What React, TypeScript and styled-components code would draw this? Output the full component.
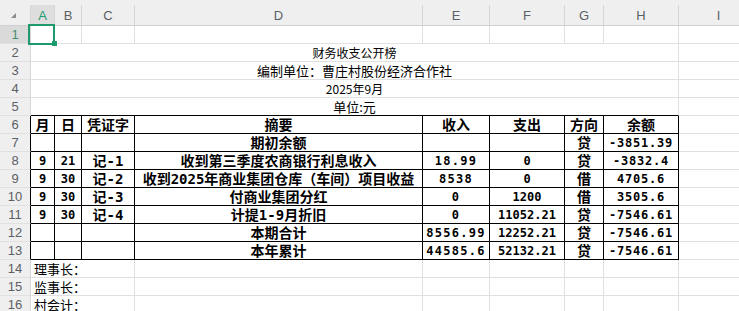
import React from "react";
import styled, { createGlobalStyle, css } from "styled-components";

const GlobalStyle = createGlobalStyle`
  html, body {
    margin: 0;
    padding: 0;
    background: #ffffff;
    overflow: hidden;
  }
  body {
    font-family: "Noto Sans CJK SC", sans-serif;
  }
`;

const GRID = "#e0e0e0";
const HEAD_LINE = "#d6d6d6";
const INK = "#000000";
const GREEN = "#1e9b6c";

const TopStrip = styled.div`
  height: 5px;
  background: #efefef;
`;

const Sheet = styled.div`
  display: grid;
  grid-template-columns: 31px 24px 27px 53px 288px 67px 75px 39px 75px 80px;
  grid-template-rows: 21px repeat(17, 18px);
  width: 739px;
  height: 306px;
  overflow: hidden;
`;

const Corner = styled.div`
  box-sizing: border-box;
  background: #efefef;
  border-right: 1px solid ${HEAD_LINE};
  border-bottom: 1px solid #cfcfcf;
  display: flex;
  align-items: flex-start;
  padding: 8px 0 0 11px;
`;

const Triangle = styled.span`
  width: 0;
  height: 0;
  border-left: 5px solid transparent;
  border-bottom: 5px solid #8c8c8c;
`;

const ColHead = styled.div<{ $active?: boolean }>`
  box-sizing: border-box;
  background: ${(p) => (p.$active ? "#dedede" : "#efefef")};
  border-right: 1px solid ${HEAD_LINE};
  border-bottom: 1px solid #cfcfcf;
  display: flex;
  align-items: center;
  justify-content: center;
  font-family: "Liberation Sans", Arial, sans-serif;
  font-size: 13px;
  color: ${(p) => (p.$active ? GREEN : "#5b5f66")};
`;

const RowHead = styled.div<{ $active?: boolean; $edge?: boolean }>`
  box-sizing: border-box;
  background: ${(p) => (p.$active ? "#dadada" : "#efefef")};
  border-right: 1px solid ${(p) => (p.$edge ? INK : HEAD_LINE)};
  border-bottom: 1px solid ${GRID};
  display: flex;
  align-items: center;
  justify-content: center;
  font-family: "Liberation Sans", Arial, sans-serif;
  font-size: 13px;
  color: ${(p) => (p.$active ? "#3f8f70" : "#5b5f66")};
`;

const Cell = styled.div<{
  $span?: number;
  $inkRight?: boolean;
  $inkBottom?: boolean;
  $align?: "left" | "center";
}>`
  box-sizing: border-box;
  position: relative;
  min-width: 0;
  background: #ffffff;
  border-right: 1px solid ${(p) => (p.$inkRight ? INK : GRID)};
  border-bottom: 1px solid ${(p) => (p.$inkBottom ? INK : GRID)};
  display: flex;
  align-items: center;
  justify-content: ${(p) => (p.$align === "left" ? "flex-start" : "center")};
  padding: ${(p) => (p.$align === "left" ? "0 0 0 3px" : "0")};
  white-space: nowrap;
  ${(p) =>
    p.$span &&
    css`
      grid-column: span ${p.$span};
    `}
`;

const Selection = styled.div`
  position: absolute;
  left: -3px;
  top: -2px;
  width: 27px;
  height: 21px;
  box-sizing: border-box;
  border: 2px solid ${GREEN};
  z-index: 2;
  pointer-events: none;
`;

const FillHandle = styled.div`
  position: absolute;
  left: 21px;
  top: 15px;
  width: 5px;
  height: 5px;
  background: ${GREEN};
  z-index: 3;
`;

const Title = styled.span<{ $size: number }>`
  font-family: "Noto Sans CJK SC", sans-serif;
  font-size: ${(p) => p.$size}px;
  color: #000;
  line-height: 1;
`;

const Label = styled.span`
  font-family: "DejaVu Sans Mono", "Noto Sans CJK SC", monospace;
  font-weight: 700;
  font-size: 14px;
  color: #000;
  line-height: 1;
`;

const Num = styled.span<{ $spacing?: number }>`
  font-family: "DejaVu Sans Mono", monospace;
  font-weight: 700;
  font-size: 12px;
  letter-spacing: ${(p) => p.$spacing ?? 0}px;
  color: #000;
  line-height: 1;
`;

const Signer = styled.span`
  font-family: "Noto Sans CJK SC", sans-serif;
  font-size: 13px;
  color: #000;
  line-height: 1;
`;

const columns = ["A", "B", "C", "D", "E", "F", "G", "H", "I"];

const titles: { text: string; size: number }[] = [
  { text: "财务收支公开榜", size: 12 },
  { text: "编制单位：曹庄村股份经济合作社", size: 13 },
  { text: "2025年9月", size: 12 },
  { text: "单位:元", size: 13 },
];

type Entry = {
  month: string;
  day: string;
  voucher: string;
  summary: string;
  income: string;
  expense: string;
  dir: string;
  balance: string;
};

const entries: Entry[] = [
  { month: "", day: "", voucher: "", summary: "期初余额", income: "", expense: "", dir: "贷", balance: "-3851.39" },
  { month: "9", day: "21", voucher: "记-1", summary: "收到第三季度农商银行利息收入", income: "18.99", expense: "0", dir: "贷", balance: "-3832.4" },
  { month: "9", day: "30", voucher: "记-2", summary: "收到2025年商业集团仓库（车间）项目收益", income: "8538", expense: "0", dir: "借", balance: "4705.6" },
  { month: "9", day: "30", voucher: "记-3", summary: "付商业集团分红", income: "0", expense: "1200", dir: "借", balance: "3505.6" },
  { month: "9", day: "30", voucher: "记-4", summary: "计提1-9月折旧", income: "0", expense: "11052.21", dir: "贷", balance: "-7546.61" },
  { month: "", day: "", voucher: "", summary: "本期合计", income: "8556.99", expense: "12252.21", dir: "贷", balance: "-7546.61" },
  { month: "", day: "", voucher: "", summary: "本年累计", income: "44585.6", expense: "52132.21", dir: "贷", balance: "-7546.61" },
];

const headings = ["月", "日", "凭证字", "摘要", "收入", "支出", "方向", "余额"];
const signers = ["理事长：", "监事长：", "村会计："];

export default function App() {
  let row = 0;
  return (
    <>
      <GlobalStyle />
      <TopStrip />
      <Sheet>
        <Corner>
          <Triangle />
        </Corner>
        {columns.map((c) => (
          <ColHead key={c} $active={c === "A"}>
            {c}
          </ColHead>
        ))}

        {/* row 1 */}
        <RowHead $active>{++row}</RowHead>
        {columns.map((c) => (
          <Cell key={c}>
            {c === "A" && (
              <>
                <Selection />
                <FillHandle />
              </>
            )}
          </Cell>
        ))}

        {/* rows 2-5: title block */}
        {titles.map((t, i) => (
          <React.Fragment key={t.text}>
            <RowHead>{++row}</RowHead>
            <Cell $span={8} $inkBottom={i === titles.length - 1}>
              <Title $size={t.size}>{t.text}</Title>
            </Cell>
            <Cell />
          </React.Fragment>
        ))}

        {/* row 6: headings */}
        <RowHead $edge>{++row}</RowHead>
        {headings.map((h) => (
          <Cell key={h} $inkRight $inkBottom>
            <Label>{h}</Label>
          </Cell>
        ))}
        <Cell />

        {/* rows 7-13: entries */}
        {entries.map((e, i) => (
          <React.Fragment key={i}>
            <RowHead $edge>{++row}</RowHead>
            <Cell $inkRight $inkBottom>
              <Num>{e.month}</Num>
            </Cell>
            <Cell $inkRight $inkBottom>
              <Num>{e.day}</Num>
            </Cell>
            <Cell $inkRight $inkBottom>
              <Label>{e.voucher}</Label>
            </Cell>
            <Cell $inkRight $inkBottom>
              <Label>{e.summary}</Label>
            </Cell>
            <Cell $inkRight $inkBottom>
              <Num $spacing={1.3}>{e.income}</Num>
            </Cell>
            <Cell $inkRight $inkBottom>
              <Num $spacing={0}>{e.expense}</Num>
            </Cell>
            <Cell $inkRight $inkBottom>
              <Label>{e.dir}</Label>
            </Cell>
            <Cell $inkRight $inkBottom>
              <Num $spacing={0.8}>{e.balance}</Num>
            </Cell>
            <Cell />
          </React.Fragment>
        ))}

        {/* rows 14-16: signatures */}
        {signers.map((s) => (
          <React.Fragment key={s}>
            <RowHead>{++row}</RowHead>
            <Cell $span={3} $align="left">
              <Signer>{s}</Signer>
            </Cell>
            {columns.slice(3).map((c) => (
              <Cell key={c} />
            ))}
          </React.Fragment>
        ))}

        <RowHead>{++row}</RowHead>
        {columns.map((c) => (
          <Cell key={c} />
        ))}
      </Sheet>
    </>
  );
}
